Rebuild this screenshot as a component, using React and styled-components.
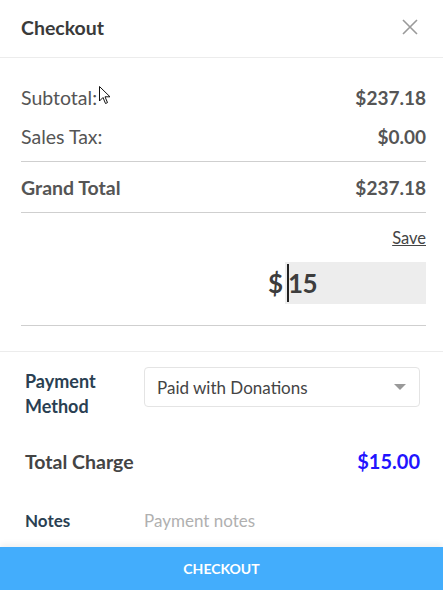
import React from "react";
import styled, { createGlobalStyle } from "styled-components";

const GlobalStyle = createGlobalStyle`
  html, body { margin: 0; padding: 0; background: #fff; }
  body { font-family: "Source Sans Pro", Lato, "Liberation Sans", sans-serif; }
  * { box-sizing: border-box; }
`;

const Panel = styled.div`
  position: relative;
  width: 443px;
  height: 590px;
  display: flex;
  flex-direction: column;
  background: #fff;
  overflow: hidden;
`;

const Header = styled.div`
  height: 58px;
  flex-shrink: 0;
  display: flex;
  align-items: center;
  justify-content: space-between;
  padding: 0 25px 3px 21px;
  border-bottom: 1px solid #ececec;
`;

const Title = styled.h2`
  margin: 0;
  font-size: 19.5px;
  font-weight: 700;
  color: #3a3a3a;
`;

const CloseBtn = styled.button`
  border: 0;
  background: none;
  padding: 0;
  width: 17px;
  height: 17px;
  display: flex;
  align-items: center;
  justify-content: center;
  cursor: pointer;
`;

const Summary = styled.div`
  padding: 20px 17px 0 21px;
  flex-shrink: 0;
`;

const Row = styled.div`
  display: flex;
  align-items: center;
  justify-content: space-between;
  height: ${p => p.h || 39}px;
  border-bottom: ${p => (p.line ? "1px solid #cfcfcf" : "none")};
  color: #555;
  font-size: 19.5px;
`;

const Label = styled.span`
  font-weight: ${p => (p.bold ? 700 : 400)};
`;

const Amount = styled.span`
  font-weight: 700;
  font-size: 19px;
`;

const Spacer = styled.div`
  height: ${p => p.h}px;
  border-bottom: ${p => (p.line ? "1px solid #cfcfcf" : "none")};
`;

const DonationBlock = styled.div`
  display: flex;
  flex-direction: column;
  align-items: flex-end;
  padding-top: 15px;
  height: 113px;
  border-bottom: 1px solid #cfcfcf;
`;

const SaveLink = styled.a`
  font-size: 16.5px;
  color: #444;
  text-decoration: underline;
  line-height: 20px;
  cursor: pointer;
`;

const AmountField = styled.div`
  margin-top: 14px;
  display: flex;
  align-items: center;
  font-size: 26px;
  font-weight: 700;
  color: #3d3d3d;
`;

const Currency = styled.span`
  margin-right: 2px;
`;

const FieldBox = styled.div`
  width: 141px;
  height: 42px;
  background: #ededed;
  display: flex;
  align-items: center;
  padding-left: 2px;
  letter-spacing: -0.5px;
`;

const Caret = styled.span`
  width: 2px;
  height: 38px;
  background: #222;
  margin-right: -1px;
`;

const Form = styled.div`
  margin-top: 25px;
  border-top: 1px solid #ececec;
  padding: 15px 23px 0 25px;
  flex: 1;
`;

const FormRow = styled.div`
  display: grid;
  grid-template-columns: 119px 1fr;
  align-items: ${p => p.align || "center"};
  min-height: ${p => p.h || 40}px;
`;

const FieldLabel = styled.div`
  font-size: ${p => p.size || 17}px;
  font-weight: 700;
  line-height: 25px;
  color: #2a3f52;
  padding-top: ${p => p.pt || 0}px;
`;

const Select = styled.div`
  height: 40px;
  border: 1px solid #e4e4e4;
  border-radius: 4px;
  display: flex;
  align-items: center;
  justify-content: space-between;
  padding: 0 12px 0 12px;
  font-size: 17px;
  color: #444;
`;

const Arrow = styled.span`
  width: 0;
  height: 0;
  border-left: 6px solid transparent;
  border-right: 6px solid transparent;
  border-top: 6px solid #999;
  margin-right: 1px;
`;

const ChargeRow = styled.div`
  display: flex;
  align-items: center;
  justify-content: space-between;
  height: 36px;
  margin: 24px 0 27px;
`;

const ChargeLabel = styled.span`
  font-size: 19.5px;
  font-weight: 700;
  color: #444;
`;

const ChargeValue = styled.span`
  font-size: 20px;
  font-weight: 700;
  color: #2214ff;
`;

const NotesInput = styled.input`
  border: 0;
  outline: none;
  padding: 0;
  font-family: inherit;
  font-size: 17px;
  color: #444;
  background: transparent;
  &::placeholder { color: #b0b0b0; }
`;

const CheckoutBtn = styled.button`
  flex-shrink: 0;
  height: 43px;
  width: 100%;
  border: 0;
  background: #43adfc;
  color: #fff;
  font-family: inherit;
  font-size: 14px;
  font-weight: 700;
  text-transform: uppercase;
  box-shadow: 0 -3px 6px rgba(0, 0, 0, 0.06);
  cursor: pointer;
`;

const Pointer = styled.svg`
  position: absolute;
  left: 99px;
  top: 86px;
`;

export default function App() {
  return (
    <>
      <GlobalStyle />
      <Panel>
        <Header>
          <Title>Checkout</Title>
          <CloseBtn aria-label="close">
            <svg width="16" height="16" viewBox="0 0 16 16">
              <path d="M1 1 L15 15 M15 1 L1 15" stroke="#9a9a9a" strokeWidth="1.6" />
            </svg>
          </CloseBtn>
        </Header>

        <Summary>
          <Row>
            <Label>Subtotal:</Label>
            <Amount>$237.18</Amount>
          </Row>
          <Row>
            <Label>Sales Tax:</Label>
            <Amount>$0.00</Amount>
          </Row>
          <Spacer h={6} line />
          <Row h={51} line>
            <Label bold>Grand Total</Label>
            <Amount>$237.18</Amount>
          </Row>
          <DonationBlock>
            <SaveLink>Save</SaveLink>
            <AmountField>
              <Currency>$</Currency>
              <FieldBox>
                <Caret />
                15
              </FieldBox>
            </AmountField>
          </DonationBlock>
        </Summary>

        <Form>
          <FormRow align="start">
            <FieldLabel pt={2} size={18}>Payment<br />Method</FieldLabel>
            <Select>
              Paid with Donations
              <Arrow />
            </Select>
          </FormRow>
          <ChargeRow>
            <ChargeLabel>Total Charge</ChargeLabel>
            <ChargeValue>$15.00</ChargeValue>
          </ChargeRow>
          <FormRow h={28}>
            <FieldLabel>Notes</FieldLabel>
            <NotesInput placeholder="Payment notes" />
          </FormRow>
        </Form>

        <CheckoutBtn>Checkout</CheckoutBtn>

        <Pointer width="12" height="19" viewBox="0 0 12 19">
          <path d="M0.5 0.5 L0.5 15 L4 11.5 L6.5 17.5 L8.5 16.6 L6 10.8 L11 10.8 Z" fill="#fff" stroke="#111" strokeWidth="1" strokeLinejoin="round" />
        </Pointer>
      </Panel>
    </>
  );
}
